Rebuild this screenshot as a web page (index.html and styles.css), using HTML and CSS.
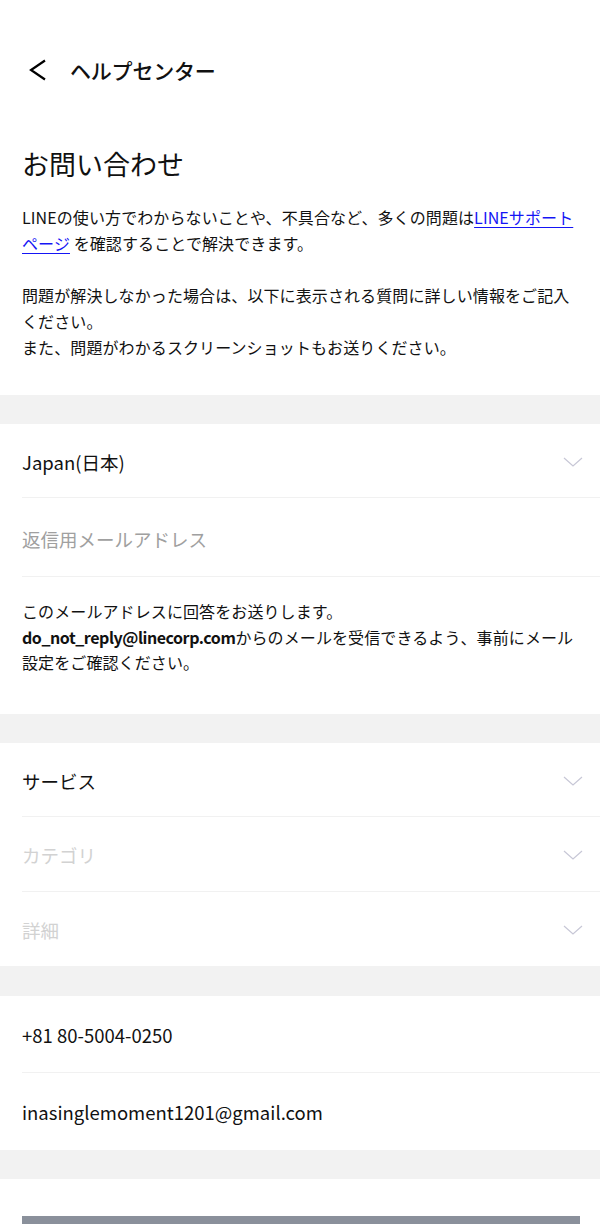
FILE: index.html
```html
<!DOCTYPE html>
<html lang="ja">
<head>
<meta charset="utf-8">
<title>お問い合わせ</title>
<link rel="stylesheet" href="styles.css">
</head>
<body>
<header class="topbar">
  <svg class="back" width="20" height="24" viewBox="0 0 20 24"><path d="M16 2.5 L2 12 L16 21.5" fill="none" stroke="#000" stroke-width="2.2" stroke-linejoin="miter"/></svg>
  <span class="topbar-title">ヘルプセンター</span>
</header>

<section class="intro">
  <h1 class="intro-title">お問い合わせ</h1>
  <p class="intro-text">LINEの使い方でわからないことや、不具合など、多くの問題は<a class="link" href="#">LINEサポートページ</a> を確認することで解決できます。<br><br>問題が解決しなかった場合は、以下に表示される質問に詳しい情報をご記入ください。<br>また、問題がわかるスクリーンショットもお送りください。</p>
</section>

<div class="band"></div>

<section class="group">
  <div class="row row-select">
    <span class="value">Japan(日本)</span>
    <svg class="chev" width="20" height="10" viewBox="0 0 20 10"><path d="M1 1 L10 9 L19 1" fill="none" stroke="#c7c7d6" stroke-width="1.2"/></svg>
  </div>
  <div class="row row-input">
    <span class="value placeholder">返信用メールアドレス</span>
  </div>
  <p class="note">このメールアドレスに回答をお送りします。<br><b class="strong">do_not_reply@linecorp.com</b>からのメールを受信できるよう、事前にメール設定をご確認ください。</p>
</section>

<div class="band"></div>

<section class="group">
  <div class="row row-select">
    <span class="value">サービス</span>
    <svg class="chev" width="20" height="10" viewBox="0 0 20 10"><path d="M1 1 L10 9 L19 1" fill="none" stroke="#c7c7d6" stroke-width="1.2"/></svg>
  </div>
  <div class="row row-select row-mid">
    <span class="value disabled">カテゴリ</span>
    <svg class="chev" width="20" height="10" viewBox="0 0 20 10"><path d="M1 1 L10 9 L19 1" fill="none" stroke="#c7c7d6" stroke-width="1.2"/></svg>
  </div>
  <div class="row row-select row-last">
    <span class="value disabled">詳細</span>
    <svg class="chev" width="20" height="10" viewBox="0 0 20 10"><path d="M1 1 L10 9 L19 1" fill="none" stroke="#c7c7d6" stroke-width="1.2"/></svg>
  </div>
</section>

<div class="band band-30"></div>

<section class="group">
  <div class="row row-contact">
    <span class="value">+81 80-5004-0250</span>
  </div>
  <div class="row row-contact row-last">
    <span class="value">inasinglemoment1201@gmail.com</span>
  </div>
</section>

<div class="band"></div>

<div class="actions">
  <div class="submit"></div>
</div>
</body>
</html>
```

FILE: styles.css
```css
* { box-sizing: border-box; }
html, body { margin: 0; padding: 0; background: #fff; }
body {
  font-family: "Noto Sans CJK JP", "Noto Sans", sans-serif;
  color: #111;
  width: 600px;
}

.topbar {
  display: flex;
  align-items: center;
  height: 44px;
  margin-top: 48px;
  padding-left: 29px;
}
.back { display: block; margin-right: 21px; }
.topbar-title {
  font-size: 21px;
  font-weight: 500;
  letter-spacing: -0.2px;
  color: #111;
}

.intro { padding: 53px 22px 35px; }
.intro-title {
  margin: 0 0 21px;
  font-size: 27px;
  font-weight: 400;
  line-height: 38px;
  color: #111;
}
.intro-text {
  margin: 0;
  font-size: 16px;
  line-height: 26px;
  letter-spacing: 0.1px;
  color: #111;
}
.link { color: #1515f5; text-decoration: underline; text-underline-offset: 3px; }

.band { height: 29px; background: #f2f2f2; }
.band-30 { height: 30px; }

.group { padding-left: 22px; }
.row {
  display: flex;
  align-items: center;
  justify-content: space-between;
  padding-right: 17px;
  border-bottom: 1px solid #f1f1f1;
}
.row-select { height: 74px; padding-top: 3px; }
.row-mid { height: 75px; }
.row-input { height: 79px; padding-top: 3px; }
.row-contact { height: 77px; padding-top: 2px; }
.row-last { border-bottom: none; }

.value { font-size: 18.5px; line-height: 26px; color: #111; }
.placeholder { color: #a0a0a0; }
.disabled { color: #d2d2d2; }
.chev { display: block; }

.note {
  margin: 0;
  padding: 22px 18px 38px 0;
  font-size: 16px;
  line-height: 25.5px;
  letter-spacing: 0.1px;
  color: #111;
}
.strong { font-weight: 700; letter-spacing: -0.45px; }

.actions { padding: 37px 20px 0 22px; }
.submit { height: 56px; background: #8a909b; }
```
